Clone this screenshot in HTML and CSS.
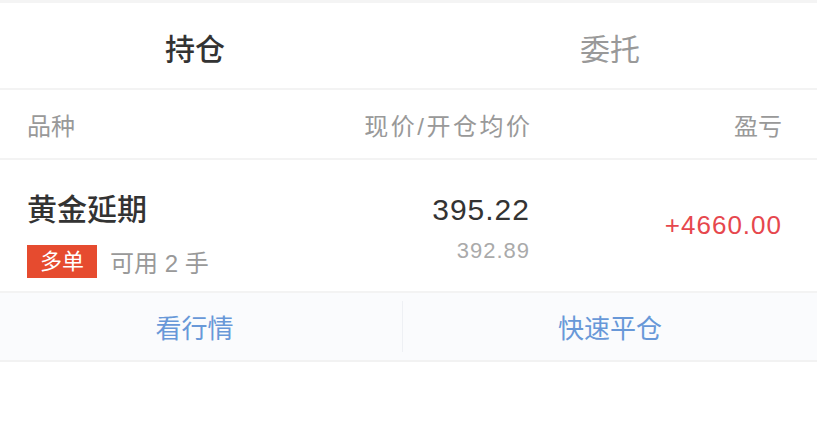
FILE: index.html
```html
<!DOCTYPE html>
<html lang="zh-CN">
<head>
    <meta charset="UTF-8">
    <meta name="viewport" content="width=device-width, initial-scale=1.0">
    <title>持仓</title>
    <link rel="stylesheet" href="styles.css">
</head>
<body>
    <div class="strip"></div>
    <nav class="tabs">
        <div class="tab active">持仓</div>
        <div class="tab">委托</div>
    </nav>
    <div class="table-head">
        <span>品种</span>
        <span class="right wide">现价/开仓均价</span>
        <span class="right">盈亏</span>
    </div>
    <div class="position">
        <div class="name-col">
            <div class="name">黄金延期</div>
            <div class="meta">
                <span class="badge">多单</span>
                <span class="avail">可用 2 手</span>
            </div>
        </div>
        <div class="price-col">
            <div class="price">395.22</div>
            <div class="avg">392.89</div>
        </div>
        <div class="pnl">+4660.00</div>
    </div>
    <div class="actions">
        <div class="action">看行情</div>
        <div class="action">快速平仓</div>
    </div>
</body>
</html>
```

FILE: styles.css
```css
body {
    margin: 0;
    background: #fff;
    font-family: 'Liberation Sans', 'Noto Sans CJK SC', sans-serif;
    color: #333;
}
.strip {
    height: 3px;
    background: #f4f4f4;
}
.tabs {
    display: grid;
    grid-template-columns: 403px 1fr;
    height: 85px;
    border-bottom: 2px solid #f3f3f3;
}
.tab {
    display: flex;
    align-items: center;
    justify-content: center;
    font-size: 30px;
    color: #999;
    padding-top: 2px;
}
.tab:first-child {
    padding-right: 13px;
}
.tab.active {
    color: #333;
    font-weight: 500;
}
.table-head {
    display: grid;
    grid-template-columns: 1fr 200px 252px;
    align-items: center;
    height: 68px;
    padding: 0 35px 0 27px;
    border-bottom: 2px solid #f3f3f3;
    font-size: 24px;
    color: #999;
}
.right {
    text-align: right;
}
.wide {
    letter-spacing: 2.5px;
    margin-right: -2.5px;
}
.position {
    display: grid;
    grid-template-columns: 1fr 200px 252px;
    align-items: start;
    height: 133px;
    box-sizing: border-box;
    padding: 32px 35px 0 27px;
    border-bottom: 2px solid #f3f3f3;
}
.name {
    font-size: 30px;
    line-height: 36px;
    font-weight: 500;
    color: #333;
}
.meta {
    display: flex;
    align-items: center;
    gap: 13px;
    margin-top: 16px;
}
.badge {
    background: #e64b2f;
    color: #fff;
    font-size: 22px;
    width: 70px;
    height: 33px;
    line-height: 33px;
    text-align: center;
}
.avail {
    font-size: 24px;
    color: #999;
}
.price-col {
    text-align: right;
}
.price {
    font-size: 30px;
    line-height: 36px;
    color: #333;
    letter-spacing: 1px;
}
.avg {
    font-size: 22px;
    line-height: 26px;
    margin-top: 10px;
    color: #aaa;
    letter-spacing: 1px;
}
.pnl {
    align-self: center;
    margin-top: -32px;
    text-align: right;
    font-size: 26px;
    color: #e6474d;
    letter-spacing: 1px;
}
.actions {
    display: grid;
    grid-template-columns: 403px 1fr;
    height: 67px;
    background: #fafbfd;
    border-bottom: 2px solid #f2f2f2;
}
.action {
    display: flex;
    align-items: center;
    justify-content: center;
    font-size: 26px;
    color: #6898d8;
}
.action:first-child {
    padding-right: 13px;
    border-right: 1px solid #eef0f4;
    margin: 8px 0;
}
```
